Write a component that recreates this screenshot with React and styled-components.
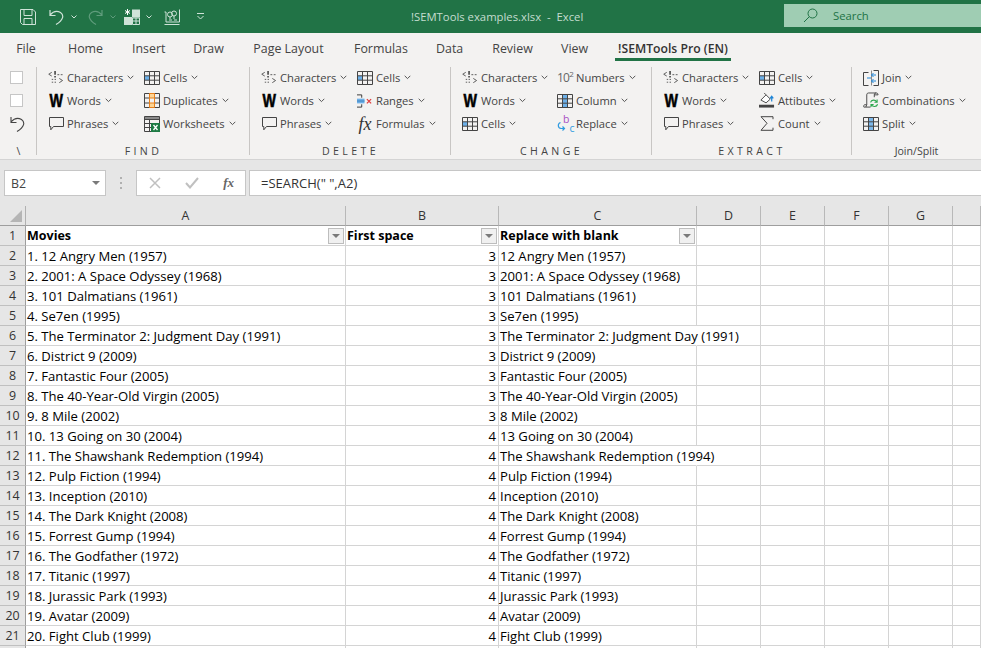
import React from 'react';
import styled, { createGlobalStyle } from 'styled-components';

const GlobalStyle = createGlobalStyle`
    html, body {
        margin: 0;
        padding: 0;
        background: #ffffff;
    }
`;

const Page = styled.div`
    width: 981px;
    height: 648px;
    overflow: hidden;
    display: flex;
    flex-direction: column;
    font-family: "Open Sans", "Noto Sans", sans-serif;
    color: #444444;
`;

/* title bar */
const TitleBar = styled.div`
    height: 33px;
    flex: none;
    display: flex;
    align-items: center;
    background: #217346;
    color: #cfe3d8;
`;

const Qat = styled.div`
    width: 411px;
    height: 100%;
    flex: none;
    display: flex;
    align-items: center;
    padding-left: 20px;
    box-sizing: border-box;
`;

const QatIcon = styled.svg`
    flex: none;
    margin-right: ${(p) => p.$gap || 0}px;
    color: ${(p) => (p.$dim ? '#5f9c7c' : '#cfe3d8')};
`;

const DocTitle = styled.div`
    width: 373px;
    flex: none;
    font-size: 11.3px;
    white-space: pre;
    color: #c4ddcf;
`;

const SearchBox = styled.div`
    flex: 1;
    height: 23px;
    margin-bottom: 2px;
    display: flex;
    align-items: center;
    gap: 15px;
    padding-left: 19px;
    background: #9fcdb3;
    color: #217346;
    font-size: 11.3px;
`;

/* tabs */
const TabBar = styled.div`
    height: 33px;
    flex: none;
    display: flex;
    background: #f3f2f1;
    padding-left: 16px;
    box-sizing: border-box;
`;

const Tab = styled.div`
    width: ${(p) => p.$w}px;
    height: 28px;
    margin-right: ${(p) => p.$gap}px;
    padding-top: 8px;
    box-sizing: border-box;
    flex: none;
    font-size: ${(p) => (p.$active ? 12.2 : 12.4)}px;
    line-height: 16px;
    white-space: nowrap;
    text-align: center;
    font-weight: ${(p) => (p.$active ? 600 : 400)};
    color: ${(p) => (p.$active ? '#333333' : '#444444')};
    border-bottom: ${(p) => (p.$active ? '3px solid #217346' : '3px solid transparent')};
`;

/* ribbon */
const Ribbon = styled.div`
    height: 94px;
    flex: none;
    display: flex;
    background: #f3f2f1;
    border-bottom: 1px solid #d4d4d4;
    box-sizing: border-box;
`;

const Group = styled.div`
    width: ${(p) => p.$w}px;
    flex: ${(p) => (p.$grow ? 1 : 'none')};
    display: flex;
    flex-direction: column;
    box-sizing: border-box;
    position: relative;
    padding-left: ${(p) => p.$pad}px;
    &::after {
        content: '';
        display: ${(p) => (p.$grow ? 'none' : 'block')};
        position: absolute;
        right: 0;
        top: 1px;
        bottom: 4px;
        width: 1px;
        background: #c8c6c4;
    }
`;

const Commands = styled.div`
    height: 77px;
    flex: none;
    display: grid;
    grid-template-columns: ${(p) => p.$cols};
    grid-auto-rows: 23px;
    grid-auto-flow: column;
    grid-template-rows: repeat(3, 23px);
`;

const Command = styled.div`
    display: flex;
    align-items: center;
    font-size: 11.2px;
    white-space: nowrap;
    color: #444444;
`;

const IconSlot = styled.span`
    width: 16px;
    height: 16px;
    margin-right: 3px;
    flex: none;
    display: flex;
    align-items: center;
    justify-content: center;
`;

const Chevron = styled.svg`
    margin-left: 4px;
    flex: none;
`;

const GroupLabel = styled.div`
    height: 16px;
    margin-left: -${(p) => p.$pad}px;
    font-size: 10.6px;
    line-height: 16px;
    text-align: center;
    letter-spacing: ${(p) => (p.$spaced ? 3.4 : 0)}px;
    color: #444444;
`;

const LeftTool = styled.div`
    height: 23px;
    display: flex;
    align-items: center;
`;

const CheckBox = styled.span`
    width: 11px;
    height: 11px;
    background: #ffffff;
    border: 1px solid #c6c6c6;
`;

const WordGlyph = styled.span`
    display: block;
    font-family: "Liberation Sans", sans-serif;
    font-weight: 700;
    font-size: 15.5px;
    line-height: 16px;
    color: #000000;
    -webkit-text-stroke: 0.5px #000000;
    transform: scale(0.92, 1.15);
`;

const FxGlyph = styled.span`
    font-family: "Liberation Serif", serif;
    font-style: italic;
    font-size: ${(p) => p.$size || 16}px;
    line-height: 16px;
    color: ${(p) => p.$color || '#333333'};
    font-weight: ${(p) => p.$weight || 400};
`;

const PowerGlyph = styled.span`
    font-size: 12px;
    line-height: 16px;
    letter-spacing: -0.8px;
    color: #666666;
    white-space: nowrap;
    sup {
        font-size: 8px;
        line-height: 0;
        vertical-align: 5px;
    }
`;

const ReplaceGlyph = styled.span`
    position: relative;
    display: block;
    width: 16px;
    height: 18px;
`;

const ReplaceLetter = styled.span`
    position: absolute;
    left: ${(p) => p.$x}px;
    top: ${(p) => p.$y}px;
    font-size: 10.5px;
    line-height: 8px;
    color: ${(p) => p.$color};
`;

/* formula bar */
const FormulaArea = styled.div`
    height: 46px;
    flex: none;
    display: flex;
    padding: 10px 0 10px 4px;
    box-sizing: border-box;
    background: #e6e6e6;
`;

const NameBox = styled.div`
    width: 102px;
    flex: none;
    display: flex;
    align-items: center;
    justify-content: space-between;
    padding: 0 5px 0 6px;
    box-sizing: border-box;
    background: #ffffff;
    border: 1px solid #c6c6c6;
    font-size: 12.4px;
    color: #444444;
`;

const Triangle = styled.span`
    width: 0;
    height: 0;
    border-left: ${(p) => p.$size}px solid transparent;
    border-right: ${(p) => p.$size}px solid transparent;
    border-top: ${(p) => p.$size}px solid ${(p) => p.$color};
`;

const Grip = styled.div`
    width: 30px;
    flex: none;
    display: flex;
    flex-direction: column;
    align-items: center;
    justify-content: center;
    gap: 3px;
`;

const GripDot = styled.span`
    width: 2px;
    height: 2px;
    background: #b0b0b0;
`;

const FxBox = styled.div`
    width: 110px;
    flex: none;
    display: flex;
    align-items: center;
    justify-content: space-between;
    padding: 0 11px 0 12px;
    box-sizing: border-box;
    background: #ffffff;
    border: 1px solid #c6c6c6;
`;

const FormulaInput = styled.div`
    flex: 1;
    margin-left: 3px;
    padding-left: 11px;
    display: flex;
    align-items: center;
    background: #ffffff;
    border: 1px solid #c6c6c6;
    border-right: 0;
    font-size: 13px;
    color: #333333;
`;

/* sheet */
const Sheet = styled.div`
    flex: 1;
    display: grid;
    grid-template-columns: 26px 320px 153px 198px 64px 64px 64px 64px 28px;
    grid-auto-rows: 20px;
    background: #ffffff;
`;

const Corner = styled.div`
    position: relative;
    background: #e6e6e6;
    border-right: 1px solid #b1b1b1;
    border-bottom: 1px solid #9e9e9e;
    box-sizing: border-box;
    &::after {
        content: '';
        position: absolute;
        right: 3px;
        bottom: 3px;
        width: 12px;
        height: 12px;
        background: #b5b5b5;
        clip-path: polygon(100% 0, 100% 100%, 0 100%);
    }
`;

const ColHead = styled.div`
    background: #e6e6e6;
    border-right: 1px solid #b8b8b8;
    border-bottom: 1px solid #9e9e9e;
    box-sizing: border-box;
    text-align: center;
    font-size: 12.4px;
    line-height: 20px;
    color: #333333;
`;

const RowHead = styled.div`
    background: #e6e6e6;
    border-right: 1px solid #9e9e9e;
    border-bottom: 1px solid #c0c0c0;
    box-sizing: border-box;
    text-align: center;
    font-size: 12.4px;
    line-height: 20px;
    color: #333333;
`;

const Cell = styled.div`
    display: flex;
    align-items: center;
    justify-content: ${(p) => (p.$right ? 'flex-end' : p.$header ? 'space-between' : 'flex-start')};
    padding: ${(p) => (p.$right ? '0 2px 0 0' : p.$header ? '0 1px 0 1px' : '0 0 0 1px')};
    box-sizing: border-box;
    border-right: 1px solid ${(p) => (p.$spill ? 'transparent' : '#d4d4d4')};
    border-bottom: 1px solid #d4d4d4;
    font-size: ${(p) => (p.$header ? 12.5 : 13.1)}px;
    font-weight: ${(p) => (p.$header ? 700 : 400)};
    white-space: nowrap;
    color: #000000;
`;

const FilterButton = styled.span`
    width: 16px;
    height: 16px;
    flex: none;
    display: flex;
    align-items: center;
    justify-content: center;
    box-sizing: border-box;
    background: #f0f0f0;
    border: 1px solid #bdbdbd;
`;

const Chev = () => (
    <Chevron width="7" height="5" viewBox="0 0 7 5" fill="none" stroke="#555555" strokeWidth="1">
        <path d="M.7 .8 3.500 3.600 6.300 .8" />
    </Chevron>
);

const CharsIcon = () => (
    <svg width="17" height="15" viewBox="0 0 17 15" fill="none" stroke="#555555" strokeWidth="1">
        <path d="M4 2 .8 4 4 6" />
        <path d="M7.500 .5V4.500M7.500 6V7.500" strokeWidth="1.4" stroke="#222222" />
        <path d="M10 4.500h2M13.500 4.500h2M4 9.500h1.500M7 9.500h1.500M4 12.500h1.500M7 12.500h1.500" />
        <path d="M12 8.500 15.500 10.700 12 13" />
    </svg>
);

const BubbleIcon = () => (
    <svg width="15" height="14" viewBox="0 0 15 14" fill="none" stroke="#444444" strokeWidth="1">
        <path d="M.5 .5H14.500V9.500H4.500L1.800 12.800V9.500H.5Z" />
    </svg>
);

// grid with some of its cells filled, the cells are given as col,row
const TableIcon = ({ fill = [], color = '#6db0e8', line = '#444444' }) => (
    <svg width="16" height="14" viewBox="0 0 16 14" fill="none">
        {fill.map(([c, r]) => (
            <rect key={`${c}-${r}`} x={0.5 + c * 5} y={0.5 + r * 4.33} width="5" height="4.33" fill={color} />
        ))}
        <path d="M.5 .5H15.500V13.500H.5ZM5.500 .5V13.500M10.500 .5V13.500M.5 4.800H15.500M.5 9.200H15.500" stroke={line} />
    </svg>
);

const DuplicatesIcon = () => (
    <svg width="16" height="15" viewBox="0 0 16 15" fill="none">
        <path d="M.5 .5H15.500V14.500H.5ZM.5 5H15.500M.5 10H15.500" stroke="#444444" />
        <rect x="5.500" y=".5" width="5" height="14" fill="#fdd596" />
        <rect x="5.500" y="5" width="5" height="5" fill="#f3f2f1" />
        <path d="M5.500 .5H10.500V14.500H5.500ZM5.500 5H10.500M5.500 10H10.500" stroke="#e8801a" />
    </svg>
);

const WorksheetsIcon = () => (
    <svg width="16" height="16" viewBox="0 0 16 16" fill="none">
        <rect x=".5" y=".5" width="15" height="3" fill="#8a8a8a" />
        <path d="M.5 .5H15.500V7M.5 .5V15.500H7M.5 3.500H15.500M5.500 3.500V15.500M.5 7.500H7M.5 11.500H7" stroke="#444444" />
        <rect x="7" y="7" width="9" height="9" fill="#1d7a43" />
        <path d="M9.500 9 13.500 14M13.500 9 9.500 14" stroke="#ffffff" strokeWidth="1.3" />
    </svg>
);

const RangesIcon = () => (
    <svg width="17" height="16" viewBox="0 0 17 16" fill="none">
        <path d="M0 1.500H5V4.500M0 14.500H5V11.500" stroke="#333333" />
        <rect x="0" y="5.500" width="8" height="5" fill="#6db0e8" />
        <path d="M0 8H8" stroke="#3d7fb8" />
        <path d="M10.500 6 15 10.500M15 6 10.500 10.500" stroke="#e03a3a" strokeWidth="1.3" />
    </svg>
);

const AttributesIcon = () => (
    <svg width="17" height="17" viewBox="0 0 17 17" fill="none">
        <rect x="0" y="13" width="16" height="3" fill="#444444" />
        <path d="M2 8 7.500 2.500 12 7 7.500 11 Z" stroke="#444444" fill="#ffffff" />
        <path d="M7.500 2.500 5.500 .5" stroke="#444444" />
        <path d="M13.500 9.500V4.500M11.800 6.200 13.500 4 15.200 6.200" stroke="#1f86d8" strokeWidth="1.3" />
    </svg>
);

const SigmaIcon = () => (
    <svg width="14" height="15" viewBox="0 0 14 15" fill="none" stroke="#444444">
        <path d="M13 3.200V.7H1L7 7.300 1 14.300H13V11.700" />
    </svg>
);

const JoinIcon = () => (
    <svg width="16" height="16" viewBox="0 0 16 16" fill="none">
        <path d="M5.500 2.500H.5V15.500H5.500" stroke="#444444" />
        <path d="M10.500 .5H15.500V15.500H10.500" stroke="#444444" />
        <path d="M8.500 .5V15.500" stroke="#8a8a8a" />
        <path d="M13 5H8.500M10.500 3 8.500 5 10.500 7M13 11H8.500M10.500 9 8.500 11 10.500 13M4 8H8" stroke="#1f86d8" />
    </svg>
);

const CombinationsIcon = () => (
    <svg width="17" height="17" viewBox="0 0 17 17" fill="none">
        <path d="M4 13V2.500C4 1 5 .5 6 .5H14C13 .5 12 1 12 2.500V5M12 2.500H16C16 1 15 .5 14 .5" stroke="#444444" />
        <path d="M4 13 3 15.500H1C.5 15.500 .5 14 1.500 13H4M3 15.500H8" stroke="#444444" />
        <path d="M8 10.500C9 7.500 13 7.300 14.500 10M15 7.500V10.300H12.200" stroke="#2ea84f" strokeWidth="1.2" />
        <path d="M15.500 12.500C14.500 15.500 10.500 15.700 9 13M8.500 15.500V12.700H11.300" stroke="#2ea84f" strokeWidth="1.2" />
    </svg>
);

const ReplaceArrow = () => (
    <svg width="16" height="18" viewBox="0 0 16 18" fill="none" stroke="#2f9be0" strokeWidth="1.2">
        <path d="M3.500 7.500C.5 8.500 .5 13 4 13.500H7.500M5.500 11.500 7.500 13.500 5.500 15.500" />
    </svg>
);

const FilterIcon = () => <Triangle $size={4} $color="#7a7a7a" />;

const commandGroups = [
    {
        label: 'FIND',
        w: 213,
        cols: '96px auto',
        items: [
            ['Characters', <CharsIcon />],
            ['Words', <WordGlyph>W</WordGlyph>],
            ['Phrases', <BubbleIcon />],
            ['Cells', <TableIcon fill={[[0, 1]]} />],
            ['Duplicates', <DuplicatesIcon />],
            ['Worksheets', <WorksheetsIcon />],
        ],
    },
    {
        label: 'DELETE',
        w: 201,
        cols: '96px auto',
        items: [
            ['Characters', <CharsIcon />],
            ['Words', <WordGlyph>W</WordGlyph>],
            ['Phrases', <BubbleIcon />],
            ['Cells', <TableIcon fill={[[0, 1]]} />],
            ['Ranges', <RangesIcon />],
            ['Formulas', <FxGlyph $size={18}>fx</FxGlyph>],
        ],
    },
    {
        label: 'CHANGE',
        w: 201,
        cols: '95px auto',
        items: [
            ['Characters', <CharsIcon />],
            ['Words', <WordGlyph>W</WordGlyph>],
            ['Cells', <TableIcon fill={[[0, 1]]} />],
            ['Numbers', <PowerGlyph>10<sup>2</sup></PowerGlyph>],
            ['Column', <TableIcon fill={[[1, 0], [1, 1], [1, 2]]} />],
            [
                'Replace',
                <ReplaceGlyph>
                    <ReplaceArrow />
                    <ReplaceLetter $x={6} $y={0} $color="#a84fc4">b</ReplaceLetter>
                    <ReplaceLetter $x={12.5} $y={9} $color="#2f9be0">c</ReplaceLetter>
                </ReplaceGlyph>,
            ],
        ],
    },
    {
        label: 'EXTRACT',
        w: 200,
        cols: '96px auto',
        items: [
            ['Characters', <CharsIcon />],
            ['Words', <WordGlyph>W</WordGlyph>],
            ['Phrases', <BubbleIcon />],
            ['Cells', <TableIcon fill={[[0, 1]]} />],
            ['Attibutes', <AttributesIcon />],
            ['Count', <SigmaIcon />],
        ],
    },
];

const joinItems = [
    ['Join', <JoinIcon />],
    ['Combinations', <CombinationsIcon />],
    ['Split', <TableIcon fill={[[1, 0], [1, 1], [1, 2]]} color="#7db8ea" />],
];

const tabs = [
    ['File', 20, 32],
    ['Home', 35, 29],
    ['Insert', 32, 29],
    ['Draw', 31, 29],
    ['Page Layout', 71, 30],
    ['Formulas', 53, 29],
    ['Data', 27, 29],
    ['Review', 41, 28],
    ['View', 27, 27],
];

const movies = [
    ['12 Angry Men (1957)', 3],
    ['2001: A Space Odyssey (1968)', 3],
    ['101 Dalmatians (1961)', 3],
    ['Se7en (1995)', 3],
    ['The Terminator 2: Judgment Day (1991)', 3, true],
    ['District 9 (2009)', 3],
    ['Fantastic Four (2005)', 3],
    ['The 40-Year-Old Virgin (2005)', 3],
    ['8 Mile (2002)', 3],
    ['13 Going on 30 (2004)', 4],
    ['The Shawshank Redemption (1994)', 4, true],
    ['Pulp Fiction (1994)', 4],
    ['Inception (2010)', 4],
    ['The Dark Knight (2008)', 4],
    ['Forrest Gump (1994)', 4],
    ['The Godfather (1972)', 4],
    ['Titanic (1997)', 4],
    ['Jurassic Park (1993)', 4],
    ['Avatar (2009)', 4],
    ['Fight Club (1999)', 4],
];

const BlankCells = () => (
    <>
        <Cell />
        <Cell />
        <Cell />
        <Cell />
        <Cell />
    </>
);

const App = () => {
    return (
        <Page>
            <GlobalStyle />
            <TitleBar>
                <Qat>
                    <QatIcon $gap={13} width="16" height="16" viewBox="0 0 16 16" fill="none" stroke="currentColor">
                        <path d="M.5 .5H13L15.500 3V15.500H2.500L.5 13.500ZM4 .5V6.500H12V.5M4 15.500V9.500H12V15.500" />
                    </QatIcon>
                    <QatIcon $gap={7} width="15" height="16" viewBox="0 0 15 16" fill="none" stroke="currentColor" strokeWidth="1.2">
                        <path d="M1 1V6.500H6.500M1 6C4 2.500 8 1.500 11.500 3.500 15 6 15 10.500 7 15.500" />
                    </QatIcon>
                    <QatIcon $gap={11} width="6" height="4" viewBox="0 0 6 4" fill="none" stroke="currentColor">
                        <path d="M.5 .5 3 3 5.500 .5" />
                    </QatIcon>
                    <QatIcon $dim $gap={7} width="15" height="16" viewBox="0 0 15 16" fill="none" stroke="currentColor" strokeWidth="1.2">
                        <path d="M14 1V6.500H8.500M14 6C11 2.500 7 1.500 3.500 3.500 0 6 0 10.500 8 15.500" />
                    </QatIcon>
                    <QatIcon $dim $gap={8} width="6" height="4" viewBox="0 0 6 4" fill="none" stroke="currentColor">
                        <path d="M.5 .5 3 3 5.500 .5" />
                    </QatIcon>
                    <QatIcon $gap={6} width="16" height="16" viewBox="0 0 16 16" fill="none">
                        <rect x="0" y="8" width="8" height="8" fill="currentColor" />
                        <rect x="8" y="0.500" width="8" height="8" fill="currentColor" />
                        <path d="M8.500 9H15.500V15.500H8.500ZM8.500 12H15.500M12 9V15.500" stroke="currentColor" />
                        <path d="M3.500 0V6M1 1.500 6 4.500M6 1.500 1 4.500" stroke="#ffffff" />
                    </QatIcon>
                    <QatIcon $gap={12} width="6" height="4" viewBox="0 0 6 4" fill="none" stroke="currentColor">
                        <path d="M.5 .5 3 3 5.500 .5" />
                    </QatIcon>
                    <QatIcon $gap={17} width="16" height="16" viewBox="0 0 16 16" fill="none" stroke="currentColor">
                        <path d="M.5 3H2V13H15.500V.5" />
                        <path d="M.5 15.500H15.500M5 11H8M10 11H13" />
                        <circle cx="6" cy="5.500" r="2.500" />
                        <circle cx="10" cy="4.500" r="2.500" />
                        <path d="M6 8V10M10 7V10" />
                    </QatIcon>
                    <QatIcon width="7" height="7" viewBox="0 0 7 7" fill="none" stroke="currentColor">
                        <path d="M0 .5H7M.5 3 3.500 6 6.500 3" />
                    </QatIcon>
                </Qat>
                <DocTitle>{'!SEMTools examples.xlsx  -  Excel'}</DocTitle>
                <SearchBox>
                    <svg width="15" height="15" viewBox="0 0 15 15" fill="none" stroke="#217346">
                        <circle cx="9.500" cy="5.500" r="4.500" />
                        <path d="M6.300 8.700 1 14" />
                    </svg>
                    Search
                </SearchBox>
            </TitleBar>

            <TabBar>
                {tabs.map(([name, w, gap]) => (
                    <Tab key={name} $w={w} $gap={gap}>{name}</Tab>
                ))}
                <Tab $active $w={116} $gap={0}>!SEMTools Pro (EN)</Tab>
            </TabBar>

            <Ribbon>
                <Group $w={37} $pad={10}>
                    <Commands $cols="16px">
                        <LeftTool><CheckBox /></LeftTool>
                        <LeftTool><CheckBox /></LeftTool>
                        <LeftTool>
                            <svg width="15" height="16" viewBox="0 0 15 16" fill="none" stroke="#444444" strokeWidth="1.1">
                                <path d="M1 1V6.500H6.500M1 6C4 2.500 8 1.500 11.500 3.500 15 6 15 10.500 7 15.500" />
                            </svg>
                        </LeftTool>
                    </Commands>
                    <GroupLabel $pad={10}>\</GroupLabel>
                </Group>
                {commandGroups.map((group) => (
                    <Group key={group.label} $w={group.w} $pad={11}>
                        <Commands $cols={group.cols}>
                            {group.items.map(([name, icon]) => (
                                <Command key={name}>
                                    <IconSlot>{icon}</IconSlot>
                                    {name}
                                    <Chev />
                                </Command>
                            ))}
                        </Commands>
                        <GroupLabel $pad={11} $spaced>{group.label}</GroupLabel>
                    </Group>
                ))}
                <Group $grow $pad={11}>
                    <Commands $cols="auto">
                        {joinItems.map(([name, icon]) => (
                            <Command key={name}>
                                <IconSlot>{icon}</IconSlot>
                                {name}
                                <Chev />
                            </Command>
                        ))}
                    </Commands>
                    <GroupLabel $pad={11}>Join/Split</GroupLabel>
                </Group>
            </Ribbon>

            <FormulaArea>
                <NameBox>
                    B2
                    <Triangle $size={4} $color="#7a7a7a" />
                </NameBox>
                <Grip>
                    <GripDot />
                    <GripDot />
                    <GripDot />
                </Grip>
                <FxBox>
                    <svg width="12" height="12" viewBox="0 0 12 12" fill="none" stroke="#c0c0c0" strokeWidth="1.5">
                        <path d="M1 1 11 11M11 1 1 11" />
                    </svg>
                    <svg width="14" height="12" viewBox="0 0 14 12" fill="none" stroke="#c0c0c0" strokeWidth="2">
                        <path d="M1 6 5 10.500 13 1" />
                    </svg>
                    <FxGlyph $size={13} $color="#666666" $weight={700}>fx</FxGlyph>
                </FxBox>
                <FormulaInput>=SEARCH(" ",A2)</FormulaInput>
            </FormulaArea>

            <Sheet>
                <Corner />
                {['A', 'B', 'C', 'D', 'E', 'F', 'G', 'H'].map((col) => (
                    <ColHead key={col}>{col === 'H' ? '' : col}</ColHead>
                ))}

                <RowHead>1</RowHead>
                <Cell $header>Movies<FilterButton><FilterIcon /></FilterButton></Cell>
                <Cell $header>First space<FilterButton><FilterIcon /></FilterButton></Cell>
                <Cell $header>Replace with blank<FilterButton><FilterIcon /></FilterButton></Cell>
                <BlankCells />

                {movies.map(([title, pos, spill], i) => (
                    <React.Fragment key={title}>
                        <RowHead>{i + 2}</RowHead>
                        <Cell>{`${i + 1}. ${title}`}</Cell>
                        <Cell $right>{pos}</Cell>
                        <Cell $spill={spill}>{title}</Cell>
                        <BlankCells />
                    </React.Fragment>
                ))}

                <RowHead />
                <Cell />
                <Cell />
                <Cell />
                <BlankCells />
            </Sheet>
        </Page>
    );
};

export default App;
